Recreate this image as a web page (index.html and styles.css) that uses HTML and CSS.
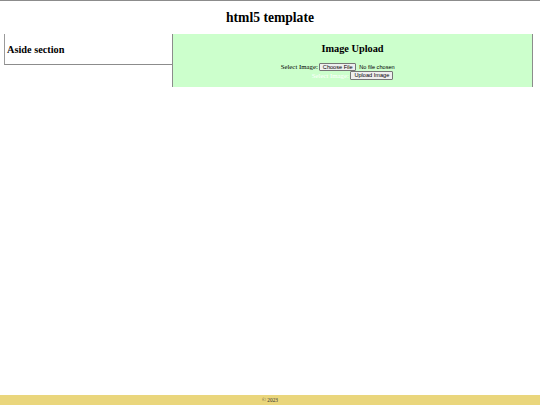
FILE: index.html
```html
<!DOCTYPE html>
<html lang="en">
<head>
<meta charset="utf-8">
<title>html5 template</title>
<link rel="stylesheet" href="styles.css">
</head>
<body>
<div class="page">
  <header class="site-header">
    <h1 class="site-title">html5 template</h1>
  </header>
  <div class="layout">
    <aside class="aside">
      <h2 class="aside-title">Aside section</h2>
    </aside>
    <main class="main">
      <h2 class="main-title">Image Upload</h2>
      <form class="upload-form" onsubmit="return false">
        <div class="form-row">
          <label class="form-label" for="image">Select Image:</label>
          <input class="file-input" type="file" id="image" name="image">
        </div>
        <div class="form-row form-row-2">
          <span class="form-label form-label-hidden">Select Image:</span>
          <button class="submit-btn" type="submit">Upload Image</button>
        </div>
      </form>
    </main>
  </div>
  <footer class="site-footer">© 2023</footer>
</div>
</body>
</html>
```
FILE: styles.css
```css
html, body {
  margin: 0;
  padding: 0;
}
body {
  font-family: "Liberation Serif", "Times New Roman", serif;
  color: #000;
  background: #fff;
}
.page {
  min-height: 100vh;
  display: flex;
  flex-direction: column;
}
.site-header {
  border-top: 1px solid #8c8c8c;
  height: 33px;
  display: flex;
  align-items: center;
  justify-content: center;
}
.site-title {
  margin: 0;
  font-size: 13.6px;
  line-height: 16px;
  font-weight: bold;
}
.layout {
  display: flex;
  align-items: flex-start;
  padding: 0 7px 0 4px;
}
.aside {
  box-sizing: border-box;
  width: 168px;
  height: 31px;
  border-left: 1px solid #9a9a9a;
  border-bottom: 1px solid #8c8c8c;
  display: flex;
  align-items: center;
  padding: 2px 0 0 2px;
}
.aside-title {
  margin: 0;
  font-size: 10.3px;
  line-height: 12px;
  font-weight: bold;
}
.main {
  box-sizing: border-box;
  width: 361px;
  height: 53px;
  background: #ccffcc;
  border-left: 1px solid #8c8c8c;
  border-right: 1px solid #8c8c8c;
}
.main-title {
  margin: 9px 0 7.5px;
  font-size: 10.3px;
  line-height: 12px;
  font-weight: bold;
  text-align: center;
}
.upload-form {
  margin: 0;
  font-size: 6.8px;
}
.form-row {
  height: 8.5px;
  display: flex;
  align-items: center;
  justify-content: center;
  gap: 1.5px;
}
.form-row-2 {
  height: 9px;
}
.form-label-hidden {
  color: #ffffff;
}
.file-input {
  width: 105px;
  margin: 0;
  padding: 0;
  font-family: "Liberation Sans", Arial, sans-serif;
  font-size: 5.6px;
  color: #000;
}
.file-input::file-selector-button {
  font: inherit;
  height: 8px;
  padding: 0 2.5px;
  margin: 0 3px 0 0;
  border: 1px solid #767676;
  border-radius: 1px;
  background: #efefef;
  color: #000;
}
.submit-btn {
  box-sizing: border-box;
  height: 9px;
  margin: 0;
  padding: 0 3px;
  font-family: "Liberation Sans", Arial, sans-serif;
  font-size: 5.6px;
  line-height: 7px;
  border: 1px solid #767676;
  border-radius: 1px;
  background: #efefef;
  color: #000;
}
.site-footer {
  margin-top: auto;
  height: 10px;
  line-height: 10px;
  background: #ead67c;
  text-align: center;
  font-size: 5.3px;
  color: #333;
}
```
